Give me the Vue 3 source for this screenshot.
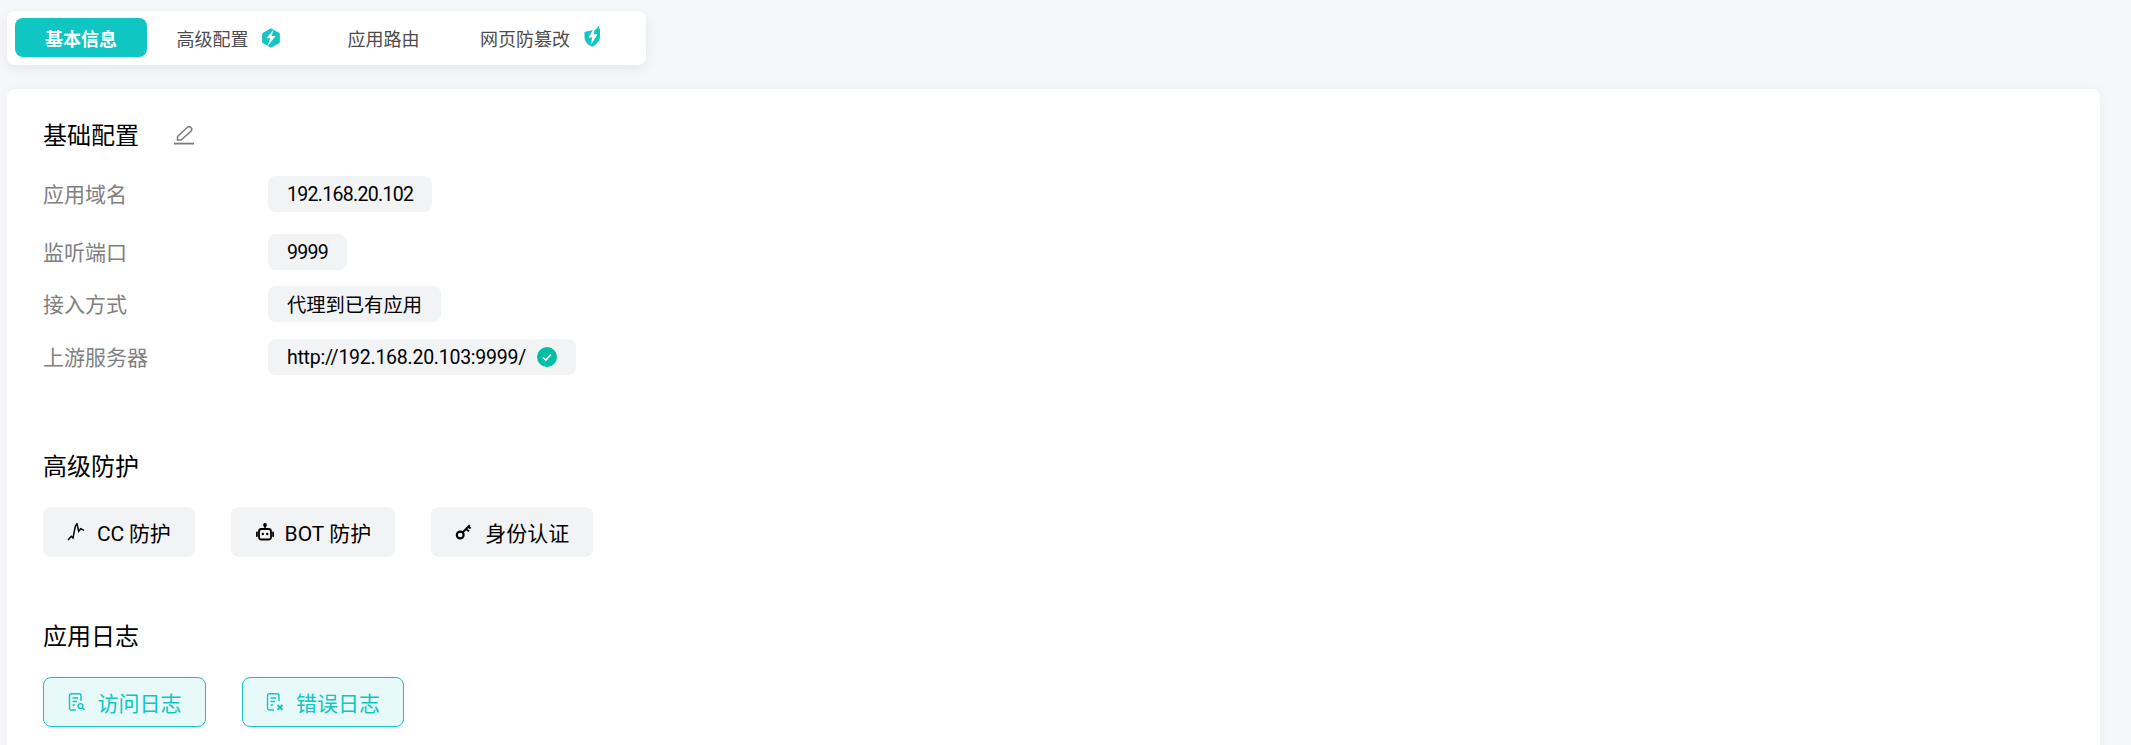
<template>
  <div class="page">
    <div class="tabs">
      <div class="tab active tab-base">基本信息</div>
      <div class="tab tab-adv">
        高级配置
        <svg class="tab-icon adv-icon" width="20" height="20" viewBox="0 0 20 20">
          <path fill="#0fc6c2" stroke="#0fc6c2" stroke-linejoin="round" d="M10 .8l8.300 4.700v9L10 19.200 1.700 14.500v-9z" />
          <path fill="#fff" d="M12.500 1.500L5.500 10.200h3.800L6.300 18.800 14.600 8h-3.900z" />
        </svg>
      </div>
      <div class="tab tab-route">应用路由</div>
      <div class="tab tab-tamper">
        网页防篡改
        <svg class="tab-icon tamper-icon" width="17" height="22" viewBox="0 0 17 22">
          <path fill="#0fc6c2" d="M.5 7l15.500-3.500V11c0 4.700-3 8.200-7.800 10.700C3.500 19.700.5 16.200.5 11.700z" />
          <path fill="#fff" d="M9.800 3.500L4.500 12.500h3.700L6.800 20 13.500 9.300H9.600l1.600-6z" />
          <path fill="#0fc6c2" d="M15.300 0l-.7 5.200-3.400.6z" />
        </svg>
      </div>
    </div>

    <div class="card">
      <div class="title-row">
        <h3 class="title">基础配置</h3>
        <svg class="edit" width="20" height="20" viewBox="0 0 20 20" fill="none" stroke="#7a7a7a">
          <path stroke-width="1.500" d="M3.500 11.500L13.500 2.300a2.400 2.400 0 0 1 3.400.2l.3.3a2.400 2.400 0 0 1-.2 3.400L7 15H3.500z" />
          <path stroke-width="1.800" d="M0 18.600h20" />
        </svg>
      </div>

      <div class="row row-first">
        <span class="label">应用域名</span>
        <span class="pill latin">192.168.20.102</span>
      </div>
      <div class="row">
        <span class="label">监听端口</span>
        <span class="pill latin">9999</span>
      </div>
      <div class="row">
        <span class="label">接入方式</span>
        <span class="pill">代理到已有应用</span>
      </div>
      <div class="row row-last">
        <span class="label">上游服务器</span>
        <span class="pill latin url">
          http://192.168.20.103:9999/
          <svg class="check" width="20" height="20" viewBox="0 0 20 20">
            <circle cx="10" cy="10" r="10" fill="#00bfa5" />
            <path d="M6 10.300l2.800 2.700 5.200-5.500" fill="none" stroke="#fff" stroke-width="1.600" />
          </svg>
        </span>
      </div>

      <h3 class="title section">高级防护</h3>
      <div class="actions">
        <div class="action">
          <svg class="action-icon" width="20" height="18" viewBox="0 0 20 18" fill="none" stroke="#000" stroke-width="1.500">
            <path d="M1 17l3.300-3.700L6 15l2.300-11.700L10 .8l1.700 7.500 2-2.600 3.300 1.600" />
          </svg>
          <span class="latin-inline cc">CC 防护</span>
        </div>
        <div class="action">
          <svg class="action-icon" width="20" height="18" viewBox="0 0 20 18">
            <circle cx="10" cy="2" r="1.900" />
            <path d="M10 3v3" stroke="#000" stroke-width="1.500" />
            <rect x="4" y="6" width="12" height="10.500" rx="2.500" fill="none" stroke="#000" stroke-width="1.800" />
            <rect x="1" y="8.500" width="1.800" height="5.500" rx=".8" />
            <rect x="17.200" y="8.500" width="1.800" height="5.500" rx=".8" />
            <circle cx="7.800" cy="11" r="1.200" />
            <circle cx="12.200" cy="11" r="1.200" />
          </svg>
          <span class="latin-inline">BOT 防护</span>
        </div>
        <div class="action">
          <svg class="action-icon" width="20" height="18" viewBox="0 0 20 18" fill="none" stroke="#000">
            <circle cx="5.200" cy="12" r="3.400" stroke-width="2.200" />
            <path stroke-width="2" d="M7.800 9.200L14.800 2.200M11 6l3 2.200M13.400 3.600l2.200 1.800" />
          </svg>
          <span>身份认证</span>
        </div>
      </div>

      <h3 class="title section-log">应用日志</h3>
      <div class="actions">
        <div class="action log">
          <svg class="action-icon" width="20" height="18" viewBox="0 0 20 18" fill="none" stroke="#0fc6c2" stroke-width="1.400">
            <path d="M8 17H3.500a2 2 0 0 1-2-2V2.700a2 2 0 0 1 2-2h7.500a2 2 0 0 1 2 2V8" />
            <path d="M4.500 5h5.500M4.500 8.500h4.500M4.500 12h2.500" />
            <circle cx="12.500" cy="13" r="2.400" />
            <path d="M14.300 14.800l2.200 2.200" />
          </svg>
          <span>访问日志</span>
        </div>
        <div class="action log">
          <svg class="action-icon" width="20" height="18" viewBox="0 0 20 18" fill="none" stroke="#0fc6c2" stroke-width="1.400">
            <path d="M8 17H3.500a2 2 0 0 1-2-2V2.700a2 2 0 0 1 2-2h7.500a2 2 0 0 1 2 2V8" />
            <path d="M4.500 5h5.500M4.500 8.500h4.500M4.500 12h2.500" />
            <path stroke-width="1.800" d="M11.500 12l5 5M16.500 12l-5 5" />
          </svg>
          <span>错误日志</span>
        </div>
      </div>
    </div>
  </div>
</template>

<script setup>
</script>

<style>
html,
body {
  margin: 0;
  background: #f6f7f9;
}
</style>

<style scoped>
.page {
  height: 745px;
  overflow: hidden;
  padding: 11px 31px 0 7px;
  box-sizing: border-box;
  font-family: "Noto Sans CJK SC", "Noto Sans", sans-serif;
  color: #000;
}

.tabs {
  display: flex;
  width: 639px;
  height: 54px;
  padding: 7px 20px 8px 8px;
  box-sizing: border-box;
  background: #fff;
  border-radius: 8px;
  box-shadow: 0 4px 12px rgba(30, 40, 70, 0.08);
}

.tab {
  display: flex;
  align-items: center;
  justify-content: center;
  font-size: 18px;
  color: #4c4c4c;
  border-radius: 8px;
}

.tab.active {
  background: #0fc6c2;
  color: #fff;
  font-weight: 700;
}

.tab-base {
  width: 132px;
}

.tab-adv {
  width: 165px;
}

.tab-route {
  width: 143px;
}

.tab-tamper {
  width: 171px;
}

.tab-icon {
  margin-left: 14px;
}

.adv-icon {
  margin-left: 12px;
  margin-right: 2px;
}

.tamper-icon {
  margin-top: -4px;
}

.card {
  margin-top: 24px;
  height: 700px;
  padding: 33px 37px 0 36px;
  background: #fff;
  border-radius: 8px;
  box-shadow: 0 0 14px rgba(30, 40, 70, 0.04);
}

.title-row {
  display: flex;
  align-items: center;
  height: 26px;
}

.title {
  margin: 0;
  padding-bottom: 2px;
  font-size: 24px;
  font-weight: 400;
  line-height: 24px;
}

.edit {
  margin-left: 35px;
}

.row {
  display: flex;
  align-items: center;
  margin-top: 16px;
}

.row-first {
  margin-top: 28px;
  margin-bottom: 22px;
}

.row-last {
  margin-top: 17px;
}

.label {
  width: 225px;
  padding-bottom: 2px;
  font-size: 21px;
  color: #808080;
}

.pill {
  display: inline-flex;
  align-items: center;
  height: 36px;
  padding: 0 19px;
  box-sizing: border-box;
  background: #f2f3f5;
  border-radius: 8px;
  font-size: 19.300px;
}

.pill.latin {
  font-size: 19.500px;
  font-family: Roboto, "Noto Sans CJK SC", sans-serif;
  letter-spacing: -0.7px;
}

.pill.url {
  letter-spacing: -0.25px;
}

.check {
  margin-left: 11px;
}

.section {
  margin-top: 78px;
}

.section-log {
  margin-top: 66px;
}

.actions {
  display: flex;
  gap: 36px;
  margin-top: 28px;
}

.action {
  display: flex;
  align-items: center;
  gap: 10px;
  height: 50px;
  padding: 0 24px;
  box-sizing: border-box;
  background: #f2f3f5;
  border-radius: 8px;
  font-size: 21px;
}

.latin-inline {
  font-family: Roboto, "Noto Sans CJK SC", sans-serif;
}

.latin-inline.cc {
  letter-spacing: -0.2px;
}

.action.log {
  padding: 0 23px;
  background: #e7f9f9;
  border: 1px solid #0fc6c2;
  color: #0fc6c2;
}

.action.log:first-child {
  padding: 0 23.500px;
}
</style>
